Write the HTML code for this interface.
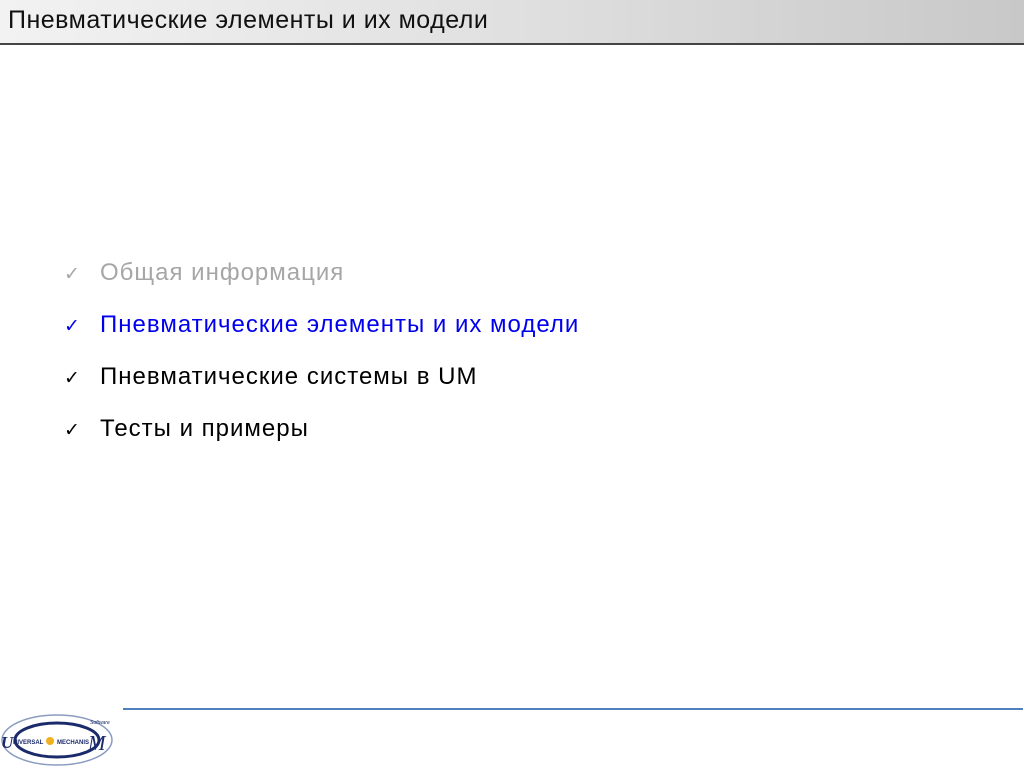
<!DOCTYPE html>
<html><head><meta charset="utf-8"><style>
body{margin:0;width:1024px;height:767px;background:#fff;position:relative;overflow:hidden;font-family:"Liberation Sans","DejaVu Sans",sans-serif}
.hdr{position:absolute;left:0;top:0;width:1024px;height:43px;background:linear-gradient(to right,#f2f2f2,#e0e0e0 50%,#c8c8c8);border-bottom:2px solid #444}
.hdr span{position:absolute;left:8px;top:6px;font-size:25px;color:#111;letter-spacing:0.5px}
.it{position:absolute;left:64px;font-size:24px;letter-spacing:1.0px;white-space:nowrap}
.it b{font-weight:bold;display:inline-block;width:36px;font-size:19px;letter-spacing:0}
.line{position:absolute;left:123px;top:708px;width:900px;height:2px;background:#4f81bd}
</style></head><body>
<div class="hdr"><span>Пневматические элементы и их модели</span></div>
<div class="it" style="top:259px;color:#a6a6a6"><b>✓</b>Общая информация</div>
<div class="it" style="top:311px;color:#0000ee"><b>✓</b>Пневматические элементы и их модели</div>
<div class="it" style="top:363px;color:#000"><b>✓</b>Пневматические системы в UM</div>
<div class="it" style="top:415px;color:#000"><b>✓</b>Тесты и примеры</div>
<div class="line"></div>
<svg style="position:absolute;left:0;top:700px" width="125" height="67">
<ellipse cx="57" cy="40" rx="55" ry="25" fill="none" stroke="#8a9cc0" stroke-width="1.5"/>
<ellipse cx="57" cy="40" rx="42" ry="17" fill="none" stroke="#1a2a6a" stroke-width="3"/>
<circle cx="50" cy="41" r="4" fill="#f0b020"/>
<text x="1" y="48" font-size="17" font-family="Liberation Serif" font-style="italic" font-weight="bold" fill="#1a2a6a">U</text>
<text x="13" y="44" font-size="6" font-weight="bold" fill="#1a2a6a">NIVERSAL</text>
<text x="57" y="44" font-size="6" font-weight="bold" fill="#1a2a6a">MECHANIS</text>
<text x="88" y="50" font-size="21" font-family="Liberation Serif" font-style="italic" fill="#1a2a6a">M</text>
<text x="90" y="24" font-size="5" font-style="italic" fill="#1a2a6a">Software</text>
</svg>
</body></html>
